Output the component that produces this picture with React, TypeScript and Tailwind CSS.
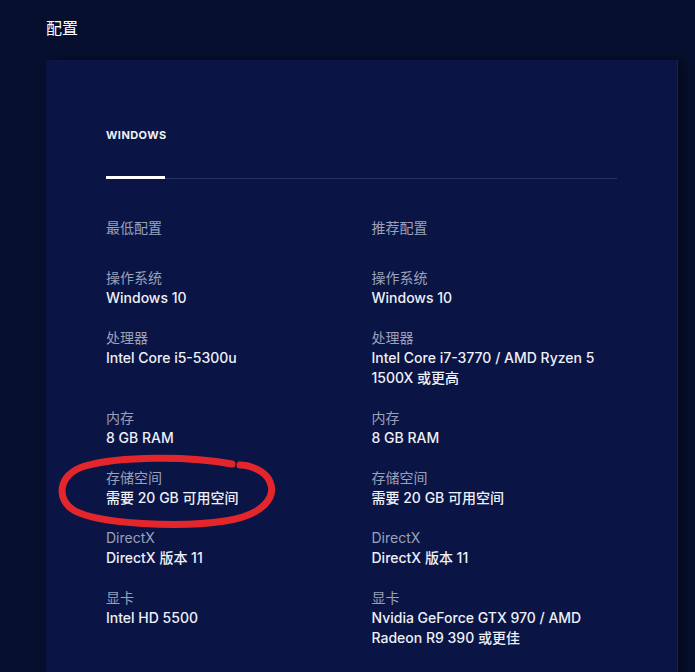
import type {FC} from "react";

type Spec = {label: string; min: string; rec: string};

const specs: Spec[] = [
	{label: "操作系统", min: "Windows 10", rec: "Windows 10"},
	{label: "处理器", min: "Intel Core i5-5300u", rec: "Intel Core i7-3770 / AMD Ryzen 5 1500X 或更高"},
	{label: "内存", min: "8 GB RAM", rec: "8 GB RAM"},
	{label: "存储空间", min: "需要 20 GB 可用空间", rec: "需要 20 GB 可用空间"},
	{label: "DirectX", min: "DirectX 版本 11", rec: "DirectX 版本 11"},
	{label: "显卡", min: "Intel HD 5500", rec: "Nvidia GeForce GTX 970 / AMD Radeon R9 390 或更佳"},
];

const Cell: FC<{label: string; value: string}> = ({label, value}) => (
	<div className="flex flex-col">
		<span className="text-[#9ba1ba]">{label}</span>
		<span className="font-medium text-[#eef0f7]">{value}</span>
	</div>
);

const App: FC = () => {
	return (
		<div
			className="relative min-h-screen bg-[#060f2d] px-[46px] pt-4 text-[14px] leading-5"
			style={{fontFamily: 'Inter, "Noto Sans CJK SC", sans-serif'}}
		>
			<h2 className="text-[16px] leading-6 text-white">配置</h2>
			<div className="mt-5 w-[632px] bg-[#0a1545] px-[60px] pt-[67px] pb-10 shadow-[6px_0_10px_rgba(0,0,0,0.35)] border-r border-[#16215a]">
				<div className="text-[11px] font-bold leading-4 tracking-[0.04em] text-[#eef0f7]">
					WINDOWS
				</div>
				<div className="mt-[33px] flex items-end">
					<div className="h-[3px] w-[59px] bg-white" />
					<div className="h-px flex-1 bg-[#28336a]" />
				</div>
				<div className="mt-[39px] mb-[30px] grid grid-cols-2 gap-x-5 text-[#9ba1ba]">
					<span>最低配置</span>
					<span>推荐配置</span>
				</div>
				<div className="grid grid-cols-2 gap-x-5 gap-y-5">
					{specs.map((s) => (
						<div key={s.label} className="contents">
							<Cell label={s.label} value={s.min} />
							<Cell label={s.label} value={s.rec} />
						</div>
					))}
				</div>
			</div>
			{/* hand-drawn red circle annotation */}
			<svg
				className="pointer-events-none absolute left-0 top-0"
				width="695"
				height="672"
				viewBox="0 0 695 672"
			>
				<path
					d="M232,464 C190,456 120,456 85,466 C58,474 55,500 75,511 C100,524 180,528 225,521 C265,515 276,496 270,482 C266,471 250,465 240,465"
					fill="none"
					stroke="#e3262b"
					strokeWidth="7"
					strokeLinecap="round"
				/>
			</svg>
		</div>
	);
};

export default App;
